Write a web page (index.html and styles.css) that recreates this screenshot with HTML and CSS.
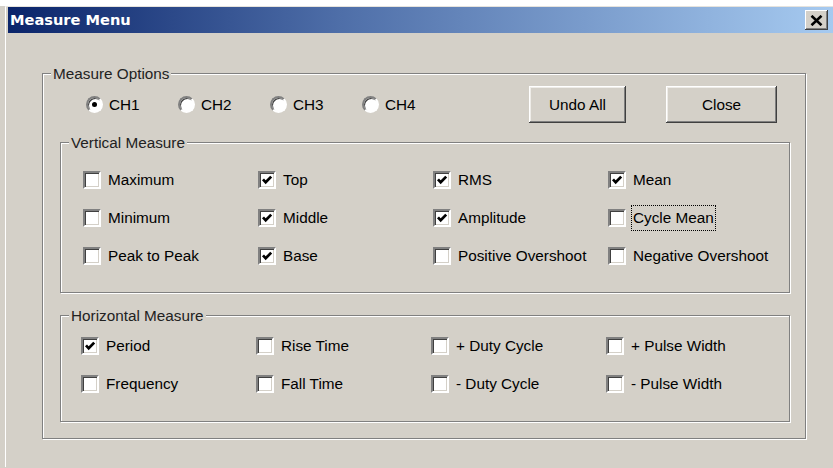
FILE: index.html
```html
<!DOCTYPE html>
<html lang="en">
<head>
<meta charset="utf-8">
<title>Measure Menu</title>
<link rel="stylesheet" href="styles.css">
</head>
<body>
<div class="strip"></div>
<div class="window">
  <div class="titlebar">
    <span class="title">Measure Menu</span>
    <button class="close-x" aria-label="Close">
      <svg width="13" height="11" viewBox="0 0 13 11"><path d="M1.5 0.8 L11.5 10.2 M11.5 0.8 L1.5 10.2" stroke="#000" stroke-width="2.6" fill="none"/></svg>
    </button>
  </div>
  <div class="client">
    <div class="group outer">
      <div class="group-title">Measure Options</div>
      <div class="options-row">
        <div class="radios">
          <label class="radio-item"><span class="radio on"></span>CH1</label>
          <label class="radio-item"><span class="radio"></span>CH2</label>
          <label class="radio-item"><span class="radio"></span>CH3</label>
          <label class="radio-item"><span class="radio"></span>CH4</label>
        </div>
        <div class="actions">
          <button class="btn btn-undo">Undo All</button>
          <button class="btn btn-close">Close</button>
        </div>
      </div>

      <div class="group vertical">
        <div class="group-title">Vertical Measure</div>
        <div class="check-grid">
          <label class="check"><span class="box"></span><span>Maximum</span></label>
          <label class="check"><span class="box on"><svg viewBox="0 0 12 12"><path d="M2 5.3 L4.7 8.3 L10.2 2.6" stroke="#000" stroke-width="2.7" fill="none"/></svg></span><span>Top</span></label>
          <label class="check"><span class="box on"><svg viewBox="0 0 12 12"><path d="M2 5.3 L4.7 8.3 L10.2 2.6" stroke="#000" stroke-width="2.7" fill="none"/></svg></span><span>RMS</span></label>
          <label class="check"><span class="box on"><svg viewBox="0 0 12 12"><path d="M2 5.3 L4.7 8.3 L10.2 2.6" stroke="#000" stroke-width="2.7" fill="none"/></svg></span><span>Mean</span></label>

          <label class="check"><span class="box"></span><span>Minimum</span></label>
          <label class="check"><span class="box on"><svg viewBox="0 0 12 12"><path d="M2 5.3 L4.7 8.3 L10.2 2.6" stroke="#000" stroke-width="2.7" fill="none"/></svg></span><span>Middle</span></label>
          <label class="check"><span class="box on"><svg viewBox="0 0 12 12"><path d="M2 5.3 L4.7 8.3 L10.2 2.6" stroke="#000" stroke-width="2.7" fill="none"/></svg></span><span>Amplitude</span></label>
          <label class="check"><span class="box"></span><span class="focus">Cycle Mean</span></label>

          <label class="check"><span class="box"></span><span>Peak to Peak</span></label>
          <label class="check"><span class="box on"><svg viewBox="0 0 12 12"><path d="M2 5.3 L4.7 8.3 L10.2 2.6" stroke="#000" stroke-width="2.7" fill="none"/></svg></span><span>Base</span></label>
          <label class="check"><span class="box"></span><span>Positive Overshoot</span></label>
          <label class="check"><span class="box"></span><span>Negative Overshoot</span></label>
        </div>
      </div>

      <div class="group horizontal">
        <div class="group-title">Horizontal Measure</div>
        <div class="check-grid">
          <label class="check"><span class="box on"><svg viewBox="0 0 12 12"><path d="M2 5.3 L4.7 8.3 L10.2 2.6" stroke="#000" stroke-width="2.7" fill="none"/></svg></span><span>Period</span></label>
          <label class="check"><span class="box"></span><span>Rise Time</span></label>
          <label class="check"><span class="box"></span><span>+ Duty Cycle</span></label>
          <label class="check"><span class="box"></span><span>+ Pulse Width</span></label>

          <label class="check"><span class="box"></span><span>Frequency</span></label>
          <label class="check"><span class="box"></span><span>Fall Time</span></label>
          <label class="check"><span class="box"></span><span>- Duty Cycle</span></label>
          <label class="check"><span class="box"></span><span>- Pulse Width</span></label>
        </div>
      </div>
    </div>
  </div>
</div>
</body>
</html>
```

FILE: styles.css
```css
html, body {
  margin: 0;
  padding: 0;
}

body {
  width: 833px;
  height: 468px;
  overflow: hidden;
  background: #d4d0c8;
  color: #000;
  font-family: "Liberation Sans", Arial, sans-serif;
  font-size: 15.3px;
}

/* white page area peeking above the dialog */
.strip {
  height: 6px;
  background: #fff;
}

.window {
  margin-left: 5px;
  padding-left: 2px;
  border-top: 1px solid #e6e3dd;
  border-left: 1px solid #fff;
  height: 461px;
  box-sizing: border-box;
}

/* caption bar */
.titlebar {
  height: 26px;
  display: flex;
  align-items: center;
  justify-content: space-between;
  padding: 0 5px 0 2px;
  background: linear-gradient(to right, #0a246a 0%, #4e6ea8 40%, #a6caf0 100%);
}

.title {
  color: #fff;
  font-family: "DejaVu Sans", Verdana, sans-serif;
  font-weight: bold;
  font-size: 14.6px;
  line-height: 18px;
}

.close-x {
  width: 23px;
  height: 20px;
  padding: 0;
  border: none;
  background: #d4d0c8;
  display: flex;
  align-items: center;
  justify-content: center;
  box-shadow: inset -1px -1px 0 #404040, inset 1px 1px 0 #fff, inset -2px -2px 0 #808080;
}

.close-x svg {
  display: block;
}

.client {
  padding: 40px 0 0 34px;
}

/* etched group frame */
.group {
  border: 1px solid #808080;
  box-shadow: 1px 1px 0 #fff, inset 1px 1px 0 #fff;
  display: flex;
  flex-direction: column;
}

.group-title {
  align-self: flex-start;
  margin-top: -9px;
  margin-left: 8px;
  padding: 0 2px;
  height: 17px;
  line-height: 17px;
  background: #d4d0c8;
  color: #222;
}

.outer {
  width: 764px;
  box-sizing: border-box;
  padding-bottom: 16px;
}

.options-row {
  display: flex;
  align-items: center;
  height: 37px;
  margin-top: 4px;
  padding-left: 43px;
  padding-right: 28px;
}

.radios {
  display: flex;
}

.radio-item {
  width: 92px;
  display: flex;
  align-items: center;
  gap: 6px;
}

.radio {
  width: 17px;
  height: 17px;
  box-sizing: border-box;
  border-radius: 50%;
  border: 2px solid;
  border-color: #808080 #fff #fff #808080;
  box-shadow: inset 1px 1px 0 #404040;
  background: #fff;
  display: flex;
  align-items: center;
  justify-content: center;
}

.radio.on::after {
  content: "";
  width: 5px;
  height: 5px;
  border-radius: 50%;
  background: #000;
}

.actions {
  margin-left: auto;
  display: flex;
  gap: 40px;
}

.btn {
  height: 37px;
  padding: 0;
  border: none;
  background: #d4d0c8;
  font: inherit;
  color: #000;
  box-shadow: inset -1px -1px 0 #404040, inset 1px 1px 0 #fff, inset -2px -2px 0 #808080, inset 2px 2px 0 #eeece8;
}

.btn-undo {
  width: 97px;
}

.btn-close {
  width: 111px;
}

.vertical {
  margin: 19px 15px 0 17px;
  padding-bottom: 17px;
}

.vertical .check-grid {
  margin-top: 10px;
  padding-left: 22px;
}

.horizontal {
  margin: 22px 15px 0 17px;
  padding-bottom: 18px;
}

.horizontal .check-grid {
  margin-top: 3px;
  padding-left: 20px;
}

.check-grid {
  display: grid;
  grid-template-columns: repeat(4, 175px);
  grid-auto-rows: 38px;
}

.check {
  display: flex;
  align-items: center;
  gap: 7px;
  white-space: nowrap;
}

.box {
  width: 18px;
  height: 18px;
  flex: none;
  box-sizing: border-box;
  background: #fff;
  border: 2px solid;
  border-color: #808080 #fff #fff #808080;
  box-shadow: inset 1px 1px 0 #404040, inset -1px -1px 0 #d4d0c8;
  display: flex;
  align-items: center;
  justify-content: center;
}

.box svg {
  width: 12px;
  height: 12px;
  display: block;
}

/* keyboard focus rectangle */
.focus {
  outline: 1px dotted #000;
  padding: 3px 1px;
  margin: -3px -1px;
}
```
